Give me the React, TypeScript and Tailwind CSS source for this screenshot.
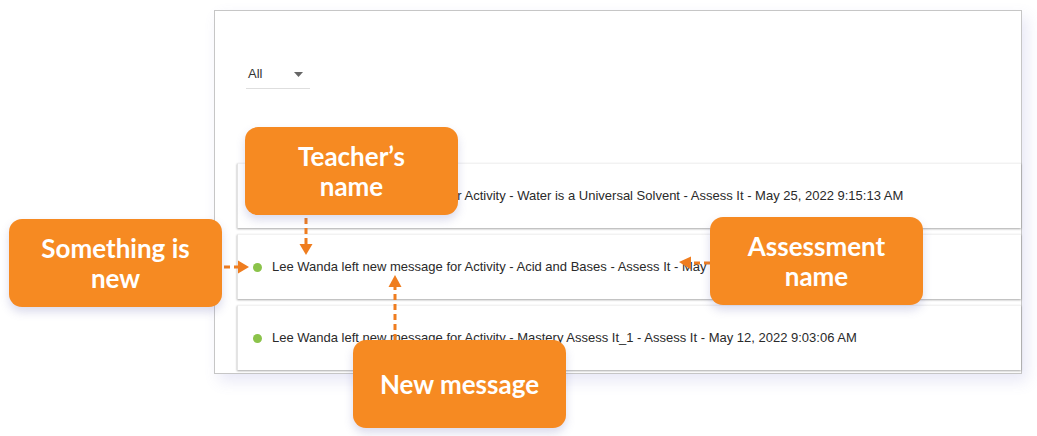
import React from "react";

const rows = [
  "Lee Wanda left new message for Activity - Water is a Universal Solvent - Assess It - May 25, 2022 9:15:13 AM",
  "Lee Wanda left new message for Activity - Acid and Bases - Assess It - May 25, 2022 9:10:42 AM",
  "Lee Wanda left new message for Activity - Mastery Assess It_1 - Assess It - May 12, 2022 9:03:06 AM",
];

function Callout({ className, lines }: { className: string; lines: string[] }) {
  return (
    <div
      className={
        "absolute w-[213px] h-[88px] rounded-[13px] bg-[#F68A22] shadow-[0_5px_10px_rgba(90,90,170,0.22)] flex flex-col items-center justify-center text-white font-['Lato',sans-serif] font-bold text-[26px] leading-[30px] " +
        className
      }
    >
      {lines.map((l) => (
        <div key={l}>{l}</div>
      ))}
    </div>
  );
}

export default function App() {
  return (
    <div className="relative w-[1037px] h-[436px] bg-white overflow-hidden font-['Liberation_Sans',Arial,sans-serif]">
      <div className="pl-[214px] pt-[10px]">
        <div className="w-[808px] h-[364px] bg-white border border-[#c6c6c6] shadow-[5px_7px_14px_rgba(110,110,200,0.16)] flex flex-col">
          <div className="ml-[31px] mt-[52px] w-[64px] h-[26px] border-b border-[#dedede] flex items-center justify-between pl-[2px] pr-[7px] pb-[3px]">
            <span className="text-[13px] text-[#333]">All</span>
            <svg width="9" height="5" viewBox="0 0 9 5">
              <path d="M0 0 L9 0 L4.5 5 Z" fill="#666" />
            </svg>
          </div>
          <div className="mt-[74px] ml-[22px] flex flex-col gap-[6px]">
            {rows.map((r) => (
              <div
                key={r}
                className="h-[65px] bg-white border-l border-t border-l-[#e4e4e4] border-t-[#f2f2f2] shadow-[0_1px_2px_rgba(0,0,0,0.35)] flex items-center pl-[15px]"
              >
                <span className="w-[9px] h-[9px] rounded-full bg-[#8bc34a] shrink-0" />
                <span className="ml-[10px] text-[13px] text-[#2a2a2a] whitespace-nowrap">{r}</span>
              </div>
            ))}
          </div>
        </div>
      </div>

      <svg className="absolute left-0 top-0" width="1037" height="436" viewBox="0 0 1037 436">
        <g stroke="#EF7D1F" strokeWidth="3" strokeDasharray="6 4" fill="none">
          <line x1="306" y1="218" x2="306" y2="245" />
          <line x1="224" y1="267" x2="239" y2="267" />
          <line x1="395" y1="340" x2="395" y2="286" />
          <line x1="710" y1="263" x2="690" y2="263" />
        </g>
        <g fill="#EF7D1F">
          <polygon points="299.5,244 312.5,244 306,255" />
          <polygon points="238,260.5 238,273.5 249,267" />
          <polygon points="388.5,287 401.5,287 395,275" />
          <polygon points="691,256.5 691,269.5 679,262" />
        </g>
      </svg>

      <Callout className="left-[245px] top-[127px]" lines={["Teacher’s", "name"]} />
      <Callout className="left-[9px] top-[219px]" lines={["Something is", "new"]} />
      <Callout className="left-[710px] top-[217px]" lines={["Assessment", "name"]} />
      <Callout className="left-[353px] top-[340px]" lines={["New message"]} />
    </div>
  );
}
